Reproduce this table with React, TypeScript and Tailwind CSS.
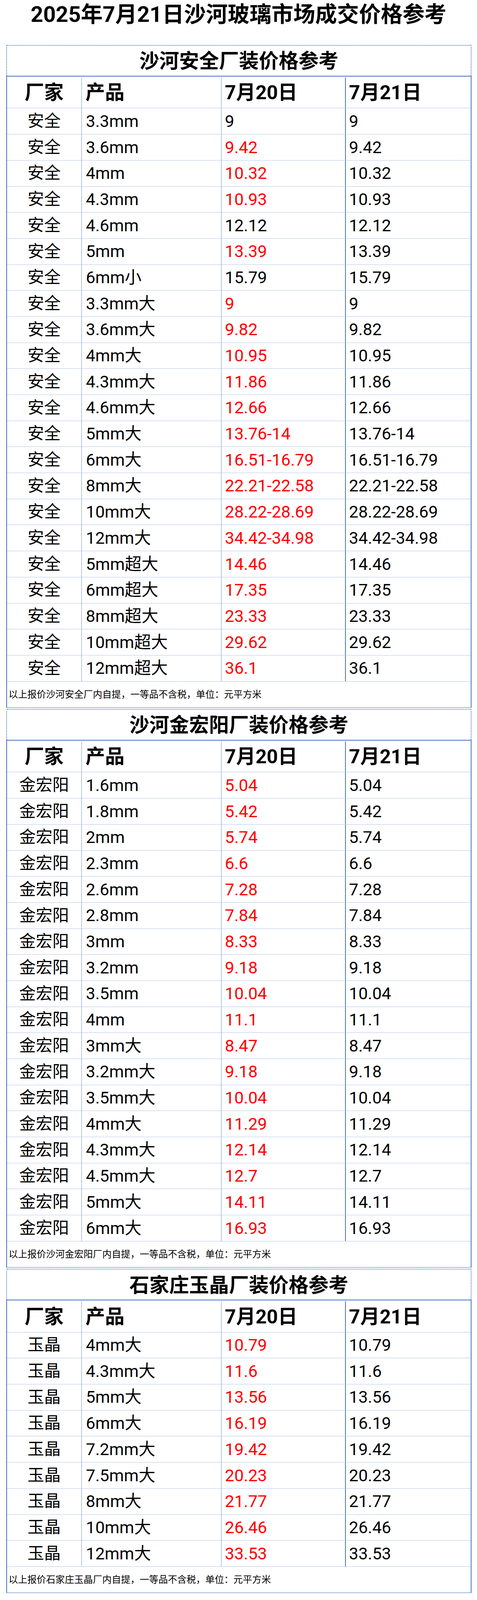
type Row = [string, string, string, boolean];

interface Section {
  title: string;
  maker: string;
  note: string;
  rows: Row[];
}

const sections: Section[] = [
  {
    title: "沙河安全厂装价格参考",
    maker: "安全",
    note: "以上报价沙河安全厂内自提，一等品不含税，单位：元平方米",
    rows: [
      ["3.3mm", "9", "9", false],
      ["3.6mm", "9.42", "9.42", true],
      ["4mm", "10.32", "10.32", true],
      ["4.3mm", "10.93", "10.93", true],
      ["4.6mm", "12.12", "12.12", false],
      ["5mm", "13.39", "13.39", true],
      ["6mm小", "15.79", "15.79", false],
      ["3.3mm大", "9", "9", true],
      ["3.6mm大", "9.82", "9.82", true],
      ["4mm大", "10.95", "10.95", true],
      ["4.3mm大", "11.86", "11.86", true],
      ["4.6mm大", "12.66", "12.66", true],
      ["5mm大", "13.76-14", "13.76-14", true],
      ["6mm大", "16.51-16.79", "16.51-16.79", true],
      ["8mm大", "22.21-22.58", "22.21-22.58", true],
      ["10mm大", "28.22-28.69", "28.22-28.69", true],
      ["12mm大", "34.42-34.98", "34.42-34.98", true],
      ["5mm超大", "14.46", "14.46", true],
      ["6mm超大", "17.35", "17.35", true],
      ["8mm超大", "23.33", "23.33", true],
      ["10mm超大", "29.62", "29.62", true],
      ["12mm超大", "36.1", "36.1", true],
    ],
  },
  {
    title: "沙河金宏阳厂装价格参考",
    maker: "金宏阳",
    note: "以上报价沙河金宏阳厂内自提，一等品不含税，单位：元平方米",
    rows: [
      ["1.6mm", "5.04", "5.04", true],
      ["1.8mm", "5.42", "5.42", true],
      ["2mm", "5.74", "5.74", true],
      ["2.3mm", "6.6", "6.6", true],
      ["2.6mm", "7.28", "7.28", true],
      ["2.8mm", "7.84", "7.84", true],
      ["3mm", "8.33", "8.33", true],
      ["3.2mm", "9.18", "9.18", true],
      ["3.5mm", "10.04", "10.04", true],
      ["4mm", "11.1", "11.1", true],
      ["3mm大", "8.47", "8.47", true],
      ["3.2mm大", "9.18", "9.18", true],
      ["3.5mm大", "10.04", "10.04", true],
      ["4mm大", "11.29", "11.29", true],
      ["4.3mm大", "12.14", "12.14", true],
      ["4.5mm大", "12.7", "12.7", true],
      ["5mm大", "14.11", "14.11", true],
      ["6mm大", "16.93", "16.93", true],
    ],
  },
  {
    title: "石家庄玉晶厂装价格参考",
    maker: "玉晶",
    note: "以上报价石家庄玉晶厂内自提，一等品不含税，单位：元平方米",
    rows: [
      ["4mm大", "10.79", "10.79", true],
      ["4.3mm大", "11.6", "11.6", true],
      ["5mm大", "13.56", "13.56", true],
      ["6mm大", "16.19", "16.19", true],
      ["7.2mm大", "19.42", "19.42", true],
      ["7.5mm大", "20.23", "20.23", true],
      ["8mm大", "21.77", "21.77", true],
      ["10mm大", "26.46", "26.46", true],
      ["12mm大", "33.53", "33.53", true],
    ],
  },
];

function PriceSection({ section }: { section: Section }) {
  return (
    <section>
      {/* 标题行：虚线边框 */}
      <div className="flex h-[79.3px] items-center justify-center border-2 border-b-0 border-dotted border-[#4472c4] pt-[3px] text-[51px] font-bold leading-none">
        {section.title}
      </div>
      <div className="border-x-2 border-b-[1.6px] border-t-[2.5px] border-[#4472c4]">
        <div className="grid h-[81.4px] grid-cols-[192px_358px_318px_1fr] border-b-[1.6px] border-[#b4c6e7] pt-[2px] text-[50px] font-bold leading-none">
          <div className="flex items-center justify-center border-r-2 border-[#b4c6e7]">厂家</div>
          <div className="flex items-center border-r-2 border-[#b4c6e7] pl-[9px]">产品</div>
          <div className="flex items-center border-r-2 border-[#4472c4] pl-[8px]">7月20日</div>
          <div className="flex items-center pl-[8px]">7月21日</div>
        </div>
        {section.rows.map(([product, before, today, changed]) => (
          <div
            key={product}
            className="grid h-[66.7px] grid-cols-[192px_358px_318px_1fr] border-b-[1.6px] border-[#b4c6e7] text-[43px] leading-none"
          >
            <div className="flex items-center justify-center border-r-2 border-[#b4c6e7] text-[42.5px]">
              {section.maker}
            </div>
            <div className="flex items-center border-r-2 border-[#b4c6e7] pl-[10px]">{product}</div>
            <div
              className={`flex items-center border-r-2 border-[#4472c4] pl-[8px] ${
                changed ? "text-[#ff0000]" : "text-black"
              }`}
            >
              {before}
            </div>
            <div className="flex items-center pl-[8px]">{today}</div>
          </div>
        ))}
        <div className="flex h-[65.9px] items-center pl-[4px] text-[24px] leading-none">{section.note}</div>
      </div>
    </section>
  );
}

export default function App() {
  return (
    <div className="w-full bg-white font-['Roboto','Noto_Sans_CJK_SC',sans-serif] text-black">
      <h1 className="h-[114.8px] pt-[6.6px] text-center text-[56px] font-bold leading-[60px]">
        2025年7月21日沙河玻璃市场成交价格参考
      </h1>
      <div className="ml-[16px] flex w-[1192px] flex-col gap-[3.3px]">
        {sections.map((s) => (
          <PriceSection key={s.title} section={s} />
        ))}
      </div>
    </div>
  );
}
